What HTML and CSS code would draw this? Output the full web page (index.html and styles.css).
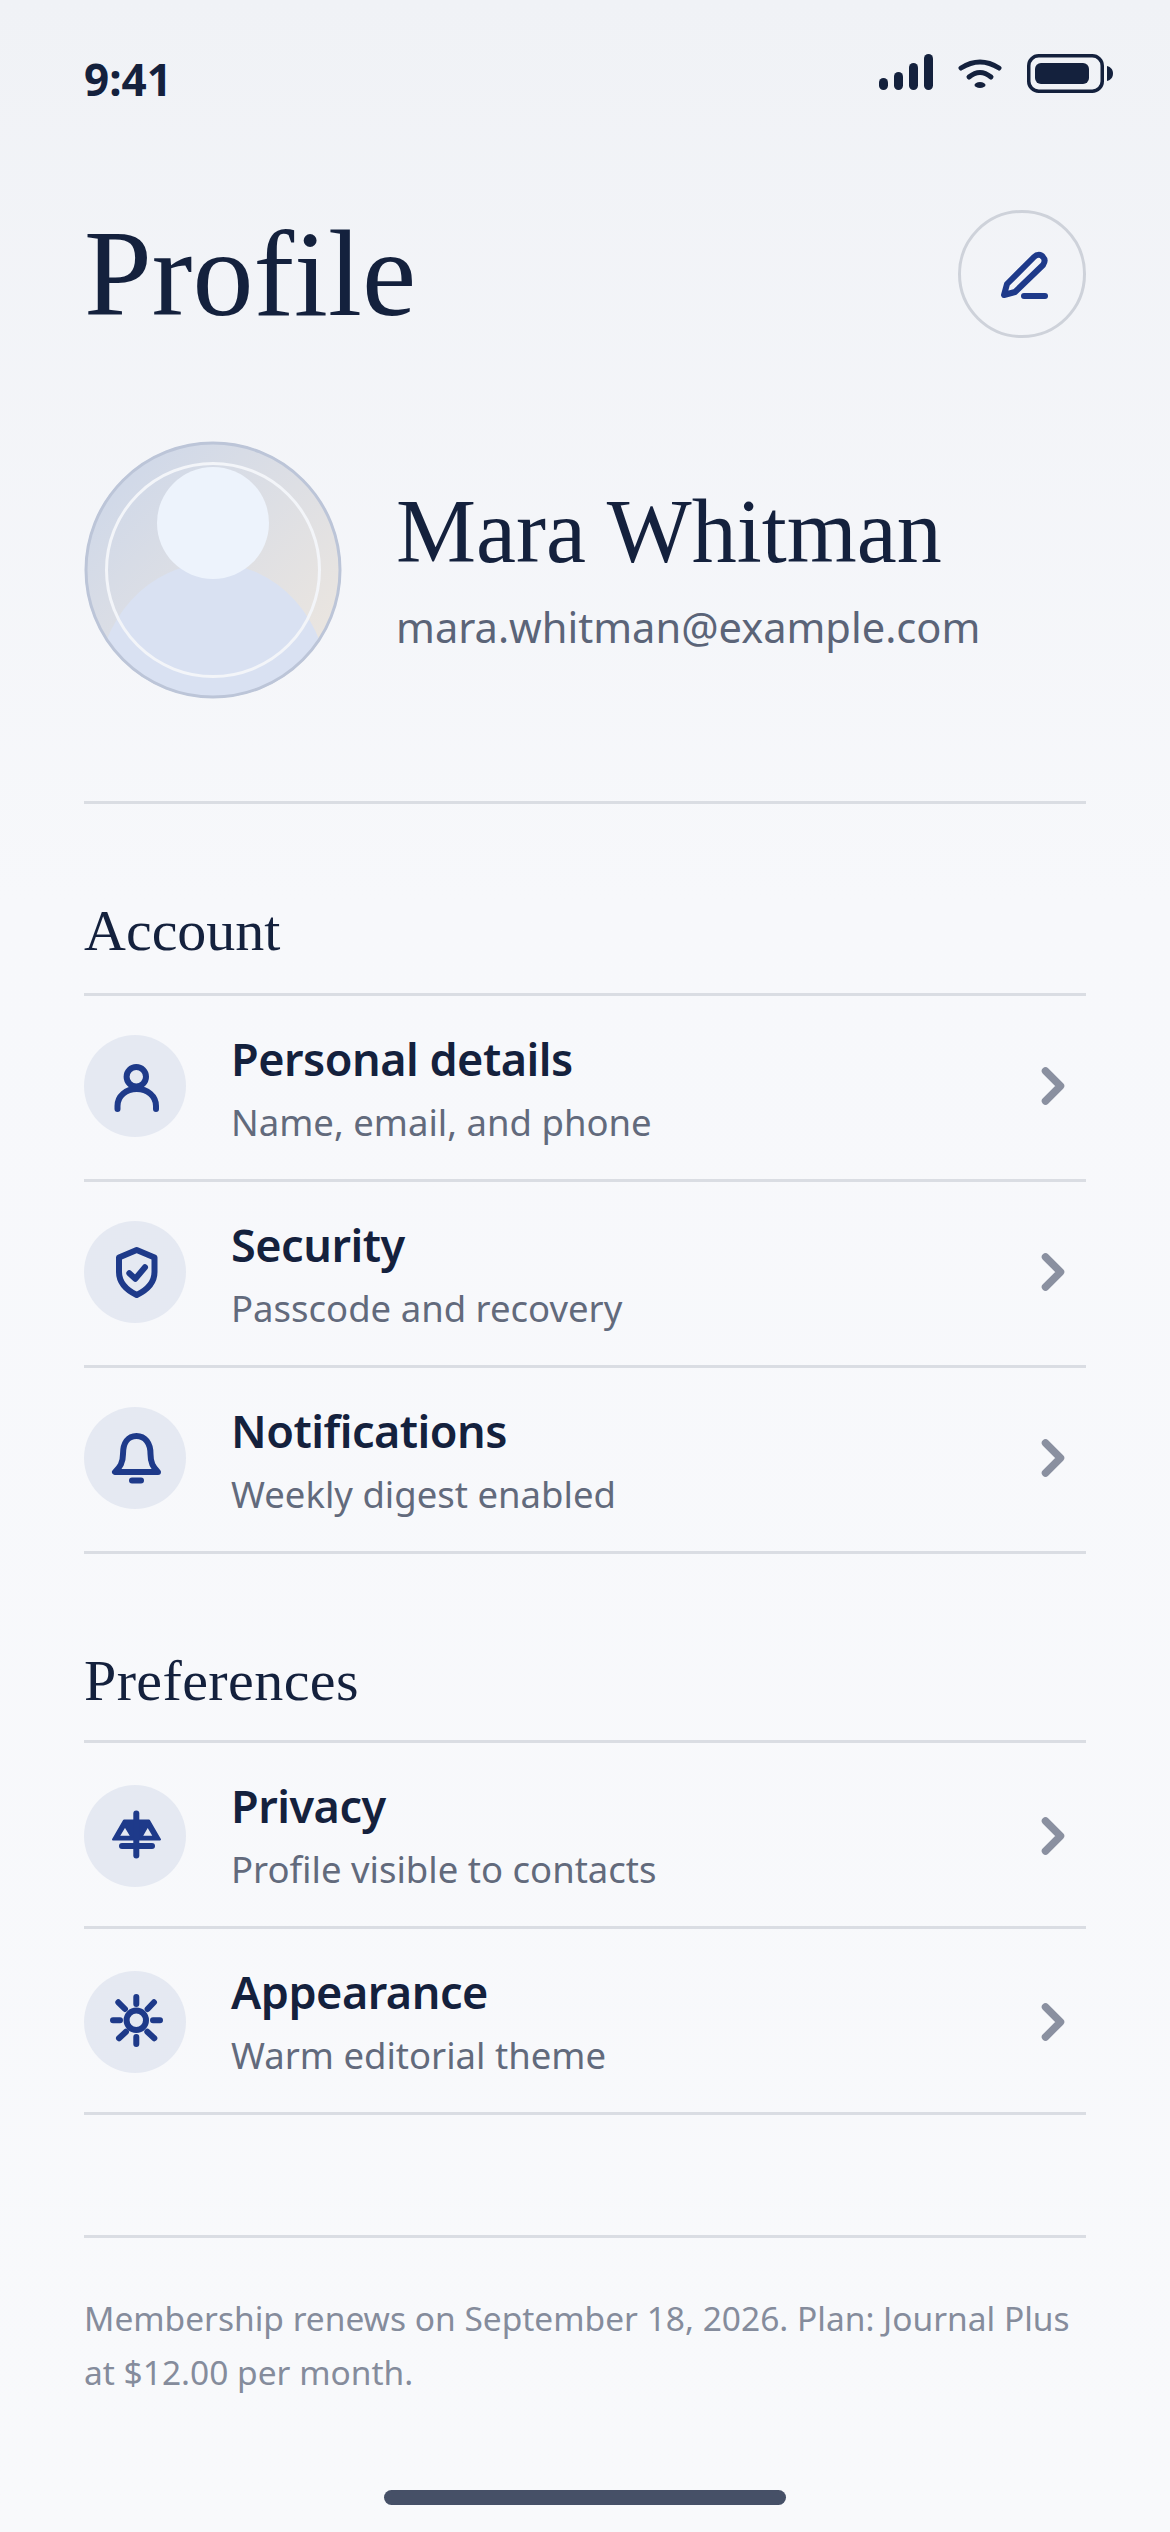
FILE: index.html
```html
<!DOCTYPE html>
<html lang="en">
<head>
<meta charset="utf-8">
<title>Profile</title>
<link rel="stylesheet" href="styles.css">
</head>
<body>
<div class="screen">
  <div class="status">
    <span class="time">9:41</span>
    <div class="status-icons">
      <svg class="sig" width="54" height="39" viewBox="0 0 54 39"><rect x="0" y="24" width="9" height="12" rx="4.500"/><rect x="15" y="18" width="9" height="18" rx="4.500"/><rect x="30" y="9" width="9" height="27" rx="4.500"/><rect x="45" y="0" width="9" height="36" rx="4.500"/></svg>
      <svg class="wifi" width="44" height="39" viewBox="0 0 44 39"><path d="M3 14Q22 2 41 14"/><path d="M11 23Q22 14 33 23"/><ellipse cx="22" cy="31" rx="5.500" ry="3" class="dot"/></svg>
      <svg class="batt" width="86" height="39" viewBox="0 0 86 39"><rect x="1.750" y="1.750" width="73.500" height="35.500" rx="10" class="shell"/><rect x="8" y="9" width="54" height="21" rx="6"/><path d="M80 12c4 1 6 4 6 7.500s-2 6.500-6 7.500z"/></svg>
    </div>
  </div>
  <header class="head">
    <h1 class="title">Profile</h1>
    <button class="edit" aria-label="Edit">
      <svg width="56" height="56" viewBox="0 0 56 56"><path d="M10 49L13 38L40 11C43 8 47 8 49 11C51 13 51 16 49 19L21 46Z"/><path d="M30 50H51"/></svg>
    </button>
  </header>
  <section class="user">
    <svg class="avatar" width="258" height="258" viewBox="0 0 258 258">
      <defs>
        <linearGradient id="ag" x1="0" y1="0" x2="1" y2="1"><stop offset="0" stop-color="#cbd6ea"/><stop offset="1" stop-color="#f0e8de"/></linearGradient>
        <clipPath id="ac"><circle cx="129" cy="129" r="128"/></clipPath>
      </defs>
      <circle cx="129" cy="129" r="128" fill="url(#ag)"/>
      <g clip-path="url(#ac)">
        <ellipse cx="129" cy="250" rx="116" ry="128" fill="#d9e1f2"/>
      </g>
      <circle cx="129" cy="82" r="56" fill="#edf3fc"/>
      <circle cx="129" cy="129" r="106.500" fill="none" stroke="#f3f5f9" stroke-width="3"/>
      <circle cx="129" cy="129" r="127" fill="none" stroke="#bcc5d8" stroke-width="3"/>
    </svg>
    <div class="user-text">
      <div class="name">Mara Whitman</div>
      <div class="email">mara.whitman@example.com</div>
    </div>
  </section>
  <section class="group first">
    <h2 class="group-title">Account</h2>
    <ul class="list">
      <li class="row">
        <span class="ico"><svg width="56" height="56" viewBox="0 0 56 56"><circle cx="29.300" cy="18.700" r="9.700"/><path d="M10.500 51V48C10.500 38 19 31 29.700 31S49 38 49 48V51"/></svg></span>
        <div class="row-text"><div class="row-title">Personal details</div><div class="row-sub">Name, email, and phone</div></div>
        <svg class="chev" width="26" height="40" viewBox="0 0 26 40"><path d="M5.500 5L20.500 20L5.500 35"/></svg>
      </li>
      <li class="row">
        <span class="ico"><svg width="56" height="56" viewBox="0 0 56 56"><path d="M29.700 6L47.500 13.500V28C47.500 38 40 46 29.700 51C19.500 46 12 38 12 28V13.500Z"/><path d="M22.300 29.300L28.300 34.700L38 23.300"/></svg></span>
        <div class="row-text"><div class="row-title">Security</div><div class="row-sub">Passcode and recovery</div></div>
        <svg class="chev" width="26" height="40" viewBox="0 0 26 40"><path d="M5.500 5L20.500 20L5.500 35"/></svg>
      </li>
      <li class="row">
        <span class="ico"><svg width="56" height="56" viewBox="0 0 56 56"><path d="M8 42H51C46 37 43.500 33 43.500 24C43.500 13 38 6 29.500 6S16 13 16 24C16 33 13 37 8 42Z"/><path d="M25 50.500H34"/></svg></span>
        <div class="row-text"><div class="row-title">Notifications</div><div class="row-sub">Weekly digest enabled</div></div>
        <svg class="chev" width="26" height="40" viewBox="0 0 26 40"><path d="M5.500 5L20.500 20L5.500 35"/></svg>
      </li>
    </ul>
  </section>
  <section class="group second">
    <h2 class="group-title">Preferences</h2>
    <ul class="list">
      <li class="row">
        <span class="ico"><svg width="56" height="56" viewBox="0 0 56 56"><path class="solid" fill-rule="evenodd" d="M17 12.500H42L53 31.500H6ZM18 18L11.500 28.700H24.500ZM40.700 18L34.500 28.700H47Z"/><path d="M29.300 5.500V47.500"/><path d="M15 38H45"/></svg></span>
        <div class="row-text"><div class="row-title">Privacy</div><div class="row-sub">Profile visible to contacts</div></div>
        <svg class="chev" width="26" height="40" viewBox="0 0 26 40"><path d="M5.500 5L20.500 20L5.500 35"/></svg>
      </li>
      <li class="row">
        <span class="ico"><svg width="56" height="56" viewBox="0 0 56 56"><circle cx="29.300" cy="26.300" r="9.700"/><path d="M29.300 3V10M29.300 43V50M6 26.300H13M46 26.300H53M11.300 8.300L18 15M47 8.300L40.600 15M12 44.300L19 37.700M47.300 44.300L40.300 37.700"/></svg></span>
        <div class="row-text"><div class="row-title">Appearance</div><div class="row-sub">Warm editorial theme</div></div>
        <svg class="chev" width="26" height="40" viewBox="0 0 26 40"><path d="M5.500 5L20.500 20L5.500 35"/></svg>
      </li>
    </ul>
  </section>
  <footer class="foot">Membership renews on September 18, 2026. Plan: Journal Plus at $12.00 per month.</footer>
  <div class="home"></div>
</div>
</body>
</html>
```
FILE: styles.css
```css
* { box-sizing: border-box; }
html, body { margin: 0; padding: 0; }
body { background: #f8f9fb; font-family: "Noto Sans", sans-serif; color: #14213d; }
.screen {
  width: 1170px;
  height: 2532px;
  padding: 0 84px;
  background: linear-gradient(180deg, #f0f2f6 0, #f7f8fb 900px, #f8f9fb 100%);
  display: flex;
  flex-direction: column;
  overflow: hidden;
}
.status {
  height: 100px;
  padding-top: 50px;
  display: flex;
  justify-content: space-between;
  align-items: flex-start;
}
.time { font-size: 44px; font-weight: 700; line-height: 58px; color: #14213d; }
.status-icons { display: flex; align-items: flex-start; gap: 25px; margin-right: -27px; margin-top: 4px; }
.sig rect, .batt rect, .batt path, .dot { fill: #14213d; }
.wifi path { fill: none; stroke: #14213d; stroke-width: 5; stroke-linecap: round; }
.batt .shell { fill: none; stroke: #14213d; stroke-width: 3.500; }
.head {
  margin-top: 110px;
  height: 128px;
  display: flex;
  justify-content: space-between;
  align-items: center;
}
.title {
  margin: 0;
  font-family: "Liberation Serif", serif;
  font-weight: 400;
  font-size: 122px;
  line-height: 128px;
  color: #14213d;
}
.edit {
  width: 128px;
  height: 128px;
  border-radius: 50%;
  border: 3px solid #ced2da;
  background: transparent;
  padding: 0;
  display: flex;
  align-items: center;
  justify-content: center;
}
.edit path { fill: none; stroke: #1e3a8a; stroke-width: 6; stroke-linecap: round; stroke-linejoin: round; }
.user {
  margin-top: 103px;
  padding-bottom: 102px;
  border-bottom: 3px solid #dadde3;
  display: flex;
  align-items: center;
  gap: 54px;
}
.avatar { flex: none; display: block; }
.user-text { display: flex; flex-direction: column; gap: 18px; }
.name { font-family: "Liberation Serif", serif; font-size: 90px; line-height: 96px; color: #14213d; }
.email { font-size: 41.6px; line-height: 58px; color: #5b6478; }
.group { margin-top: 95px; }
.group-title {
  margin: 0;
  font-family: "Liberation Serif", serif;
  font-weight: 400;
  font-size: 58px;
  line-height: 64px;
  color: #14213d;
}
.first .group-title { padding-bottom: 30px; }
.second .group-title { padding-bottom: 27px; letter-spacing: 0.4px; }
.list { list-style: none; margin: 0; padding: 0; border-top: 3px solid #dadde3; }
.row {
  height: 186px;
  border-bottom: 3px solid #dadde3;
  display: flex;
  align-items: center;
}
.ico {
  flex: none;
  width: 102px;
  height: 102px;
  border-radius: 50%;
  background: #e5e9f2;
  display: flex;
  align-items: center;
  justify-content: center;
}
.first .ico, .first .chev { margin-top: -3px; }
.second .ico, .second .chev { margin-top: 3px; }
.ico path, .ico circle { fill: none; stroke: #1e3a8a; stroke-width: 6; stroke-linecap: round; stroke-linejoin: round; }
.ico .solid { fill: #1e3a8a; stroke-width: 2; }
.row-text { flex: 1; margin-left: 45px; display: flex; flex-direction: column; gap: 7px; }
.row-title { font-size: 45px; font-weight: 600; line-height: 62px; letter-spacing: -0.5px; color: #14213d; }
.row-sub { font-size: 36.500px; line-height: 50px; color: #626a7c; }
.chev { flex: none; margin-right: 20px; }
.chev path { fill: none; stroke: #8a90a0; stroke-width: 7.500; stroke-linecap: round; stroke-linejoin: round; }
.foot {
  margin-top: 120px;
  padding-top: 53px;
  border-top: 3px solid #dadde3;
  font-size: 33.500px;
  line-height: 54px;
  color: #858c9c;
}
.home {
  align-self: center;
  margin-top: 91px;
  flex: none;
  width: 402px;
  height: 15px;
  border-radius: 7.500px;
  background: #465067;
}
```
